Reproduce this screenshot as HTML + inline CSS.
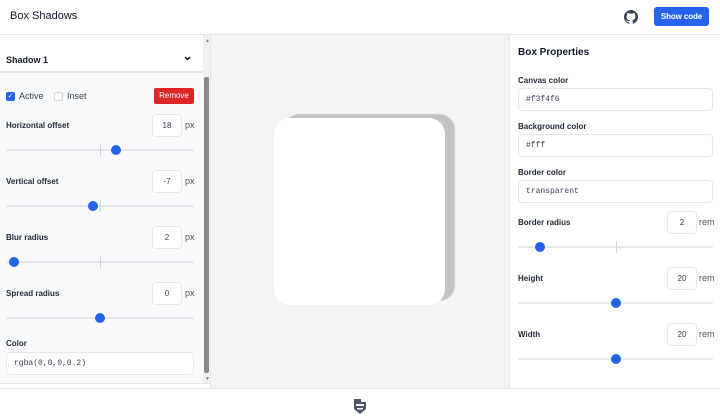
<!DOCTYPE html>
<html><head><style>
*{box-sizing:border-box;margin:0;padding:0}
body{width:720px;height:420px;position:relative;background:#fff;font-family:"Liberation Sans",sans-serif;color:#111827;overflow:hidden}
.a{position:absolute}
.lbl{position:absolute;font-size:8px;font-weight:bold;color:#1f2937}
.inp{position:absolute;background:#fff;border:1px solid #e5e7eb;border-radius:4px;height:23px;font-size:8px}
.num{text-align:center;line-height:21px;width:30px;color:#374151}
.mono{font-family:"Liberation Mono",monospace;color:#374151;padding-left:7px;line-height:21px}
.unit{position:absolute;font-size:9px;color:#4b5563}
.track{position:absolute;height:2px;background:#e5e7eb;border-radius:1px}
.tick{position:absolute;width:1px;height:12px;background:#d1d5db}
.th{position:absolute;width:10px;height:10px;border-radius:50%;background:#2563eb}
</style></head><body>
<div class="a" style="left:10px;top:10px;font-size:11px">Box Shadows</div>
<svg class="a" style="left:624px;top:10px" width="14" height="14" viewBox="0 0 16 16"><path fill="#374151" d="M8 0C3.58 0 0 3.580 0 8c0 3.54 2.29 6.53 5.47 7.590.4.07.55-.17.55-.38v-1.33c-2.23.48-2.7-1.070-2.7-1.070-.36-.93-.89-1.17-.89-1.17-.73-.5.06-.49.06-.49.8.06 1.23.82 1.230.82.72 1.23 1.88.87 2.33.66.07-.52.28-.87.51-1.07-1.78-.2-3.65-.89-3.65-3.95 0-.87.31-1.59.82-2.15-.08-.2-.36-1.02.08-2.12 0 0 .67-.21 2.2.82a7.6 7.6 0 0 1 4 0c1.53-1.04 2.2-.82 2.2-.82.44 1.1.16 1.92.08 2.12.51.56.82 1.27.82 2.15 0 3.07-1.87 3.75-3.65 3.95.29.25.54.73.54 1.48v2.2c0 .21.15.46.55.38A8 8 0 0 0 16 8c0-4.42-3.58-8-8-8z"/></svg>
<div class="a" style="left:654px;top:7px;width:55px;height:19px;background:#2563eb;border-radius:3px;color:#fff;font-size:8px;font-weight:bold;text-align:center;line-height:19px;letter-spacing:-0.1px">Show code</div>
<div class="a" style="left:0;top:34px;width:720px;height:1px;background:#e5e7eb"></div>

<div class="a" style="left:0;top:35px;width:203px;height:349px;background:#f9fafb"></div>
<div class="a" style="left:0;top:35px;width:203px;height:38px;background:#fff;border-bottom:2px solid #e5e7eb"></div>
<div class="a" style="left:6px;top:55px;font-size:9px;font-weight:bold">Shadow 1</div>
<svg class="a" style="left:184px;top:56px" width="7" height="5" viewBox="0 0 7 5"><path d="M1 1l2.5 2.5L6 1" stroke="#111" stroke-width="1.4" fill="none"/></svg>
<div class="a" style="left:203px;top:35px;width:7px;height:349px;background:#f1f1f1"></div>
<div class="a" style="left:204px;top:77px;width:5px;height:296px;background:#8a8a8a;border-radius:2px"></div>
<div class="a" style="left:205px;top:38px;font-size:5px;color:#777">▲</div>
<div class="a" style="left:205px;top:376px;font-size:5px;color:#777">▼</div>
<div class="a" style="left:210px;top:35px;width:1px;height:353px;background:#e5e7eb"></div>

<div class="a" style="left:6px;top:92px;width:9px;height:9px;background:#2563eb;border-radius:2px;color:#fff;font-size:7px;line-height:9px;text-align:center">✓</div>
<div class="a" style="left:19px;top:91px;font-size:9px;color:#374151">Active</div>
<div class="a" style="left:54px;top:92px;width:9px;height:9px;border:1px solid #d1d5db;border-radius:2px;background:#fff"></div>
<div class="a" style="left:67px;top:91px;font-size:9px;color:#374151">Inset</div>
<div class="a" style="left:154px;top:88px;width:40px;height:16px;background:#dc2626;border-radius:2px;color:#fff;font-size:8px;text-align:center;line-height:16px">Remove</div>

<div class="lbl" style="left:6px;top:121px">Horizontal offset</div>
<div class="inp num" style="left:152px;top:114px">18</div><div class="unit" style="left:185px;top:120px">px</div>
<div class="track" style="left:6px;top:149px;width:188px"></div><div class="tick" style="left:100px;top:144px"></div><div class="th" style="left:111px;top:145px"></div>

<div class="lbl" style="left:6px;top:177px">Vertical offset</div>
<div class="inp num" style="left:152px;top:170px">-7</div><div class="unit" style="left:185px;top:176px">px</div>
<div class="track" style="left:6px;top:205px;width:188px"></div><div class="tick" style="left:100px;top:200px"></div><div class="th" style="left:88px;top:201px"></div>

<div class="lbl" style="left:6px;top:233px">Blur radius</div>
<div class="inp num" style="left:152px;top:226px">2</div><div class="unit" style="left:185px;top:232px">px</div>
<div class="track" style="left:6px;top:261px;width:188px"></div><div class="tick" style="left:100px;top:256px"></div><div class="th" style="left:9px;top:257px"></div>

<div class="lbl" style="left:6px;top:289px">Spread radius</div>
<div class="inp num" style="left:152px;top:282px">0</div><div class="unit" style="left:185px;top:288px">px</div>
<div class="track" style="left:6px;top:317px;width:188px"></div><div class="th" style="left:95px;top:313px"></div>

<div class="lbl" style="left:6px;top:339px">Color</div>
<div class="inp mono" style="left:6px;top:352px;width:188px">rgba(0,0,0,0.2)</div>
<div class="a" style="left:0;top:383px;width:210px;height:1px;background:#e5e7eb"></div>

<div class="a" style="left:211px;top:35px;width:299px;height:353px;background:#f3f4f6"></div>
<div class="a" style="left:274px;top:118px;width:171px;height:187px;background:#fff;border-radius:16px;box-shadow:10px -4px 1px 0 rgba(0,0,0,0.2)"></div>

<div class="a" style="left:509px;top:35px;width:1px;height:353px;background:#e5e7eb"></div>
<div class="a" style="left:518px;top:47px;font-size:10px;font-weight:bold">Box Properties</div>
<div class="lbl" style="left:518px;top:76px">Canvas color</div>
<div class="inp mono" style="left:518px;top:88px;width:195px">#f3f4f6</div>
<div class="lbl" style="left:518px;top:122px">Background color</div>
<div class="inp mono" style="left:518px;top:134px;width:195px">#fff</div>
<div class="lbl" style="left:518px;top:168px">Border color</div>
<div class="inp mono" style="left:518px;top:180px;width:195px">transparent</div>

<div class="lbl" style="left:518px;top:218px">Border radius</div>
<div class="inp num" style="left:667px;top:211px">2</div><div class="unit" style="left:699px;top:217px">rem</div>
<div class="track" style="left:518px;top:246px;width:195px"></div><div class="tick" style="left:616px;top:241px"></div><div class="th" style="left:535px;top:242px"></div>

<div class="lbl" style="left:518px;top:274px">Height</div>
<div class="inp num" style="left:667px;top:267px">20</div><div class="unit" style="left:699px;top:273px">rem</div>
<div class="track" style="left:518px;top:302px;width:195px"></div><div class="th" style="left:611px;top:298px"></div>

<div class="lbl" style="left:518px;top:330px">Width</div>
<div class="inp num" style="left:667px;top:323px">20</div><div class="unit" style="left:699px;top:329px">rem</div>
<div class="track" style="left:518px;top:358px;width:195px"></div><div class="th" style="left:611px;top:354px"></div>

<div class="a" style="left:0;top:388px;width:720px;height:1px;background:#e5e7eb"></div>
<svg class="a" style="left:353px;top:398px" width="14" height="17" viewBox="0 0 14 17"><path fill="#4b5563" d="M1 1h7v3h5v7l-6 5-6-5z"/><rect x="3" y="6" width="8" height="2" fill="#fff"/><rect x="4" y="10" width="6" height="1.5" fill="#fff"/></svg>
</body></html>
